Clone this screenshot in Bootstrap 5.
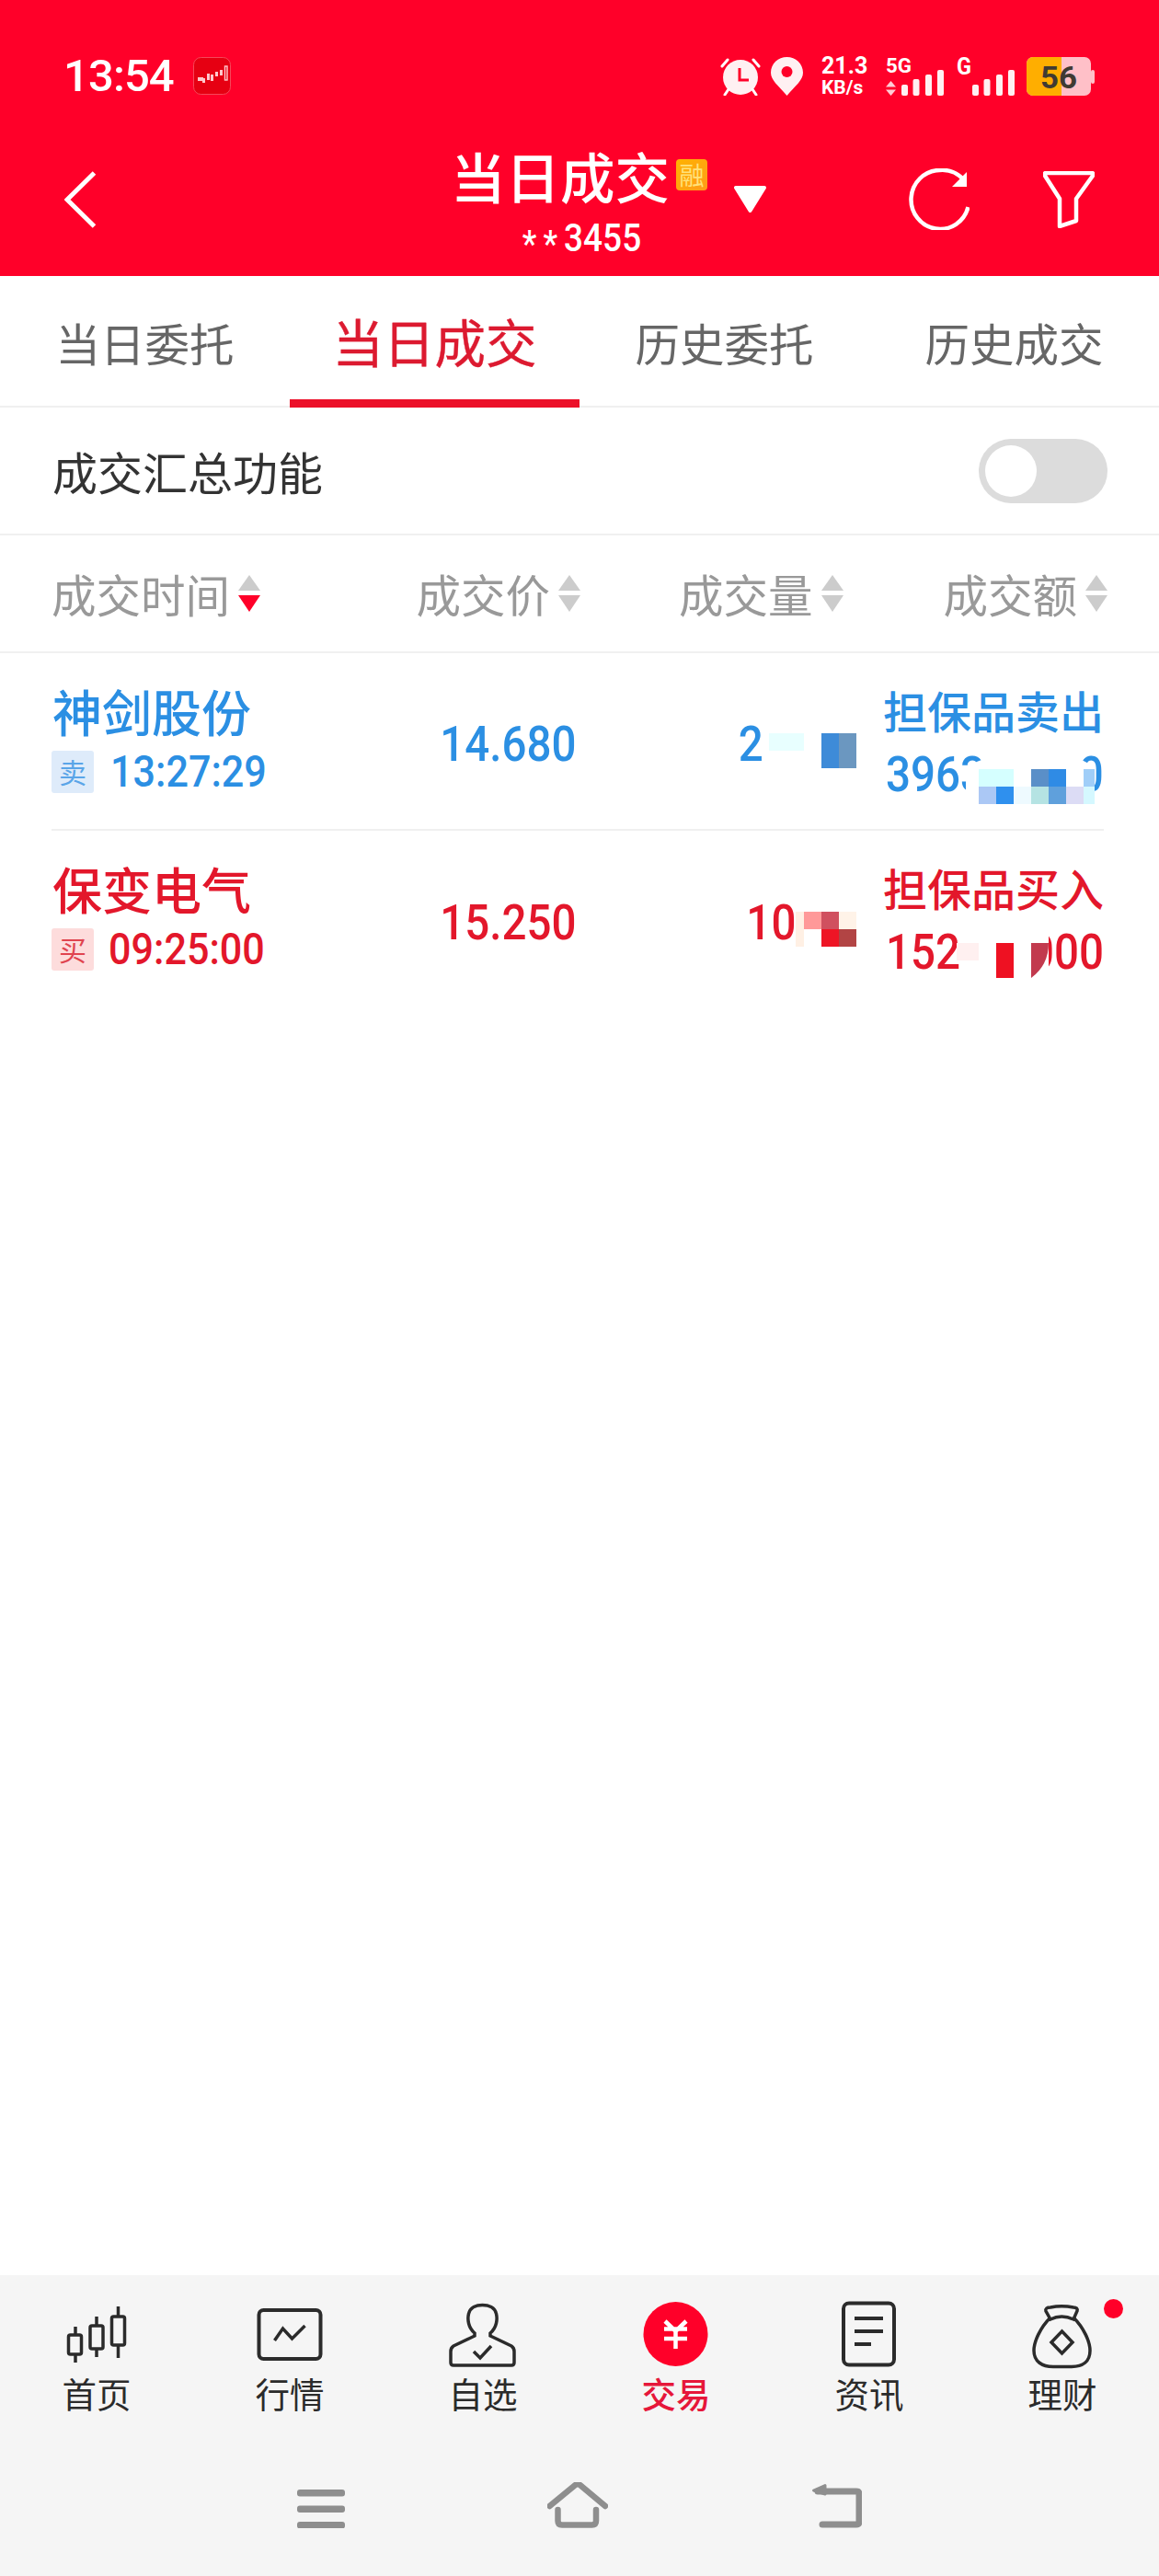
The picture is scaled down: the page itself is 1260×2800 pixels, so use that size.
<!DOCTYPE html>
<html lang="zh-CN">
<head>
<meta charset="utf-8">
<title>当日成交</title>
<link href="https://cdn.jsdelivr.net/npm/bootstrap@5.3.0/dist/css/bootstrap.min.css" rel="stylesheet">
<style>
html,body{margin:0;background:#fff}
body{width:1260px;height:2800px;font-family:"Noto Sans CJK SC","Noto Sans",sans-serif;overflow:hidden}
svg{display:block;flex:none}
.num{font-family:Roboto,"Noto Sans CJK SC",sans-serif}
.nar-l,.nar-r,.nar-c{display:inline-block;transform:scaleX(.88)}
.nar-l{transform-origin:left center}
.nar-r{transform-origin:right center}
.nar-c{transform-origin:center}
.app-shell{height:2800px}
.top-red{background:#ff0029;height:300px;color:#fff;flex:none}
.status-line{height:110px;padding:62px 70px 0 69px}
.clock{font-family:Roboto,sans-serif;font-size:49px;line-height:42px;font-weight:500;letter-spacing:-.9px;margin-right:21px}
.st-text{font-family:Roboto,sans-serif;font-weight:700;fill:#fff}
.st-tall{margin-top:-10px}
.net-speed{width:49px;margin-right:21px;font-family:Roboto,sans-serif;font-weight:700;white-space:nowrap}
.net-a{font-size:25px;line-height:20px}
.net-b{font-size:21px;line-height:20px;margin-top:3px}
.title-line{height:190px;padding-left:70px;padding-right:70px}
.back-ic{margin-top:76px;margin-right:385px}
.title-group{width:279px;padding-top:45px}
.title-main{font-size:59.500px;line-height:70px;font-weight:500;white-space:nowrap}
.rong{width:35px;height:34px;margin:18px 0 0 7px;background:linear-gradient(135deg,#ffb300,#ff9a1a);border-radius:4px;color:#ffe27a;font-size:27px;line-height:34px;text-align:center}
.title-sub{font-size:42px;line-height:40px;font-weight:500;margin-top:14px;text-align:center;padding-left:6px;white-space:nowrap}
.star{font-size:40px;position:relative;top:6px;letter-spacing:8px}
.tri-ic{margin:92px 0 0 29px}
.ref-ic{margin-top:73px}
.fil-ic{margin:76px 0 0 80px}
.tabs-line{height:143px;border-bottom:2px solid #f0f0f0;flex:none}
.tab-cell{height:141px;color:#666;font-size:48.500px;line-height:144px;text-align:center}
.tab-on{color:#dc1a30;font-size:55.500px;font-weight:400;box-shadow:inset 0 -7px 0 #ec1029,0 2px 0 #ec1029;line-height:140px;-webkit-text-stroke:.4px #dc1a30}
.sum-line{height:139px;border-bottom:2px solid #f0f0f0;padding:0 56px 0 57px;flex:none;color:#333;font-size:49px}
.sw-track{width:140px;height:70px;border-radius:35px;background:#dcdcdc;padding:7px}
.sw-knob{width:56px;height:56px;border-radius:50%;background:#fff}
.sort-line{height:128px;border-bottom:2px solid #f0f0f0;padding:0 56px;color:#999;font-size:48.500px;flex:none}
.sort-cell{gap:9px}
.sc1{width:227px}.sc2{width:348px}.sc3{width:285.5px}.sc4{width:287.5px}
.trade-row{height:193px;margin:0 60px 0 56px;border-bottom:2px solid #f0f0f0}
.trade-row.last-row{border-bottom:0}
.tr-sell{color:#2b8fe3}
.tr-buy{color:#e3172b}
.tc1{width:234px;padding-top:31px;flex:none}
.tc2{width:336px;flex:none}
.tc3{width:305px;flex:none}
.tc4{width:269px;padding-top:31px;flex:none}
.stock{font-size:54px;line-height:64px;font-weight:500;padding-left:1px}
.tm-line{margin-top:11px;height:46px}
.side-tag{width:46px;height:46px;flex:none;font-size:30px;line-height:44px;text-align:center;border-radius:3px;margin-right:18px}
.tr-sell .side-tag{background:#deebfa;color:#5aa5e8}
.tr-buy .side-tag{background:#fddcdc;color:#e0444f;margin-right:16px}
.tm{font-size:49px;line-height:46px;font-weight:500;white-space:nowrap}
.px{font-size:54px;font-weight:500;padding-top:7px;line-height:60px}
.mos{margin-top:21px}
.trade-kind{font-size:48px;line-height:60px;font-weight:500;text-align:right;white-space:nowrap}
.amt{height:60px;margin-top:11px;padding-left:32px;font-size:54px;line-height:60px;font-weight:500}
.amt-over{position:absolute}
.bottom-nav{background:#f5f5f5;height:327px;flex:none}
.nav-cell{padding-top:27px;height:150px;color:#2b2b2b;font-size:37.500px;line-height:50px}
.nav-on{color:#e6173a;font-weight:500}
.nav-label{margin-top:0}
.gest{gap:220px;padding-top:75px}
</style>
</head>
<body>
<div class="app-shell d-flex flex-column">

<header class="top-red">
  <div class="status-line d-flex align-items-start">
    <span class="clock">13:54</span>
    <svg width="41" height="41" viewBox="208 62 41 41"><rect x="208.5" y="62.5" width="40" height="40" rx="8" fill="#e60012" stroke="#f5475a"/><g fill="#ffc9cd"><rect x="213" y="84" width="6" height="4"/><rect x="218" y="85" width="3" height="5"/><rect x="223" y="80" width="3" height="7"/><rect x="227" y="81" width="3" height="7"/><rect x="232" y="78" width="3" height="5"/><rect x="237" y="76" width="3" height="6"/></g><rect x="242.5" y="72" width="2.5" height="15" fill="none" stroke="#ffc9cd" stroke-width="1.4"/></svg>
    <div class="d-flex align-items-start ms-auto">
      <svg width="44" height="42" viewBox="783 62 44 42" style="margin-right:11px"><g stroke="#fff" stroke-width="3" fill="none" stroke-linecap="round"><path d="M785 72 L791 65"/><path d="M825 72 L819 65"/><path d="M792 97 L788 103"/><path d="M818 97 L822 103"/></g><circle cx="805" cy="84" r="19" fill="#fff" fill-opacity=".94"/><path d="M804 74 V87 H814" fill="none" stroke="#ff0029" stroke-width="3"/></svg>
      <svg width="35" height="42" viewBox="838 62 35 42" style="margin-right:20px"><path d="M855.500 104 C846 93 838 87 838 79 C838 69 846 62 855.500 62 C865 62 873 69 873 79 C873 87 865 93 855.500 104Z" fill="#fff" fill-opacity=".94"/><circle cx="855.500" cy="78" r="6" fill="#ff0029"/></svg>
      <div class="net-speed"><div class="net-a">21.3</div><div class="net-b">KB/s</div></div>
      <svg class="st-tall" width="64" height="52" viewBox="963 52 64 52" style="margin-right:12px"><text class="st-text" x="963" y="79" font-size="22" textLength="28" lengthAdjust="spacingAndGlyphs">5G</text><path d="M968.500 88 L974 94.500 H963Z M968.500 104 L974 97.500 H963Z" fill="#fff" fill-opacity=".8"/><g fill="#fff" fill-opacity=".94"><rect x="980" y="92" width="7" height="12" rx="2"/><rect x="992.500" y="86" width="7" height="18" rx="2"/><rect x="1006" y="81" width="7" height="23" rx="2"/><rect x="1019" y="76" width="7" height="28" rx="2"/></g></svg>
      <svg class="st-tall" width="64" height="52" viewBox="1039 52 64 52" style="margin-right:13px"><text class="st-text" x="1040" y="81" font-size="25" textLength="16" lengthAdjust="spacingAndGlyphs">G</text><g fill="#fff" fill-opacity=".94"><rect x="1057" y="92" width="7" height="12" rx="2"/><rect x="1069.500" y="86" width="7" height="18" rx="2"/><rect x="1083" y="81" width="7" height="23" rx="2"/><rect x="1096" y="76" width="7" height="28" rx="2"/></g></svg>
      <svg width="74" height="42" viewBox="1116 62 74 42"><rect x="1116" y="62" width="70" height="42" rx="7" fill="#ffc0c8"/><path d="M1123 62 H1154 V104 H1123 A7 7 0 0 1 1116 97 V69 A7 7 0 0 1 1123 62Z" fill="#ffae00"/><rect x="1186" y="76" width="4" height="15" rx="2" fill="#ffc0c8"/><text x="1131" y="96" font-family="Roboto,sans-serif" font-weight="700" font-size="33" fill="#403a33" textLength="40" lengthAdjust="spacingAndGlyphs">56</text></svg>
    </div>
  </div>
  <div class="title-line d-flex align-items-start">
    <svg class="back-ic" width="35" height="62" viewBox="70 186 35 62"><path d="M102.500 188 L73 217 L102.500 246" fill="none" stroke="#fff" stroke-width="5"/></svg>
    <div class="title-group">
      <div class="d-flex align-items-start"><span class="title-main">当日成交</span><span class="rong">融</span></div>
      <div class="title-sub num"><span class="nar-c"><span class="star">**</span>3455</span></div>
    </div>
    <svg class="tri-ic" width="35" height="29" viewBox="798 202 35 29"><path d="M800 204 H831 L815.500 229Z" fill="#fff" stroke="#fff" stroke-width="4" stroke-linejoin="round"/></svg>
    <svg class="ref-ic ms-auto" width="66" height="67" viewBox="988 183 66 67"><path d="M1048 196 A31 31 0 0 0 1021 185 A31.500 32 0 1 0 1052.500 225" fill="none" stroke="#fff" stroke-width="4.500"/><path d="M1051 187 V203 H1035Z" fill="#fff"/></svg>
    <svg class="fil-ic" width="56" height="62" viewBox="1134 186 56 62"><path d="M1137 188 H1187 Q1189 188 1188 191 L1170 216 V240 L1152 246 V216 L1136 191 Q1135 188 1137 188Z" fill="none" stroke="#fff" stroke-width="4.500" stroke-linejoin="round"/></svg>
  </div>
</header>

<nav class="tabs-line row g-0">
  <div class="col-3 tab-cell">当日委托</div>
  <div class="col-3 tab-cell tab-on">当日成交</div>
  <div class="col-3 tab-cell">历史委托</div>
  <div class="col-3 tab-cell">历史成交</div>
</nav>

<div class="sum-line d-flex align-items-center justify-content-between">
  <span>成交汇总功能</span>
  <div class="sw-track"><div class="sw-knob"></div></div>
</div>

<div class="sort-line d-flex align-items-center">
  <div class="sort-cell sc1 d-flex align-items-center ps-0"><span>成交时间</span><svg width="24" height="40" viewBox="0 0 24 40"><path d="M12 0 L24 17 H0Z" fill="#ccc"/><path d="M0 22 H24 L12 40Z" fill="#ff0029"/></svg></div>
  <div class="sort-cell sc2 d-flex align-items-center justify-content-end"><span>成交价</span><svg width="24" height="40" viewBox="0 0 24 40"><path d="M12 0 L24 17 H0Z" fill="#ccc"/><path d="M0 22 H24 L12 40Z" fill="#ccc"/></svg></div>
  <div class="sort-cell sc3 d-flex align-items-center justify-content-end"><span>成交量</span><svg width="24" height="40" viewBox="0 0 24 40"><path d="M12 0 L24 17 H0Z" fill="#ccc"/><path d="M0 22 H24 L12 40Z" fill="#ccc"/></svg></div>
  <div class="sort-cell sc4 d-flex align-items-center justify-content-end"><span>成交额</span><svg width="24" height="40" viewBox="0 0 24 40"><path d="M12 0 L24 17 H0Z" fill="#ccc"/><path d="M0 22 H24 L12 40Z" fill="#ccc"/></svg></div>
</div>

<main class="flex-grow-1">
  <div class="trade-row tr-sell d-flex">
    <div class="tc1">
      <div class="stock">神剑股份</div>
      <div class="tm-line d-flex align-items-center"><span class="side-tag">卖</span><span class="tm num nar-l">13:27:29</span></div>
    </div>
    <div class="tc2 d-flex align-items-center justify-content-end"><span class="px num nar-r">14.680</span></div>
    <div class="tc3 d-flex align-items-center justify-content-end">
      <span class="px num nar-r">2</span>
      <svg class="mos" width="101" height="38" viewBox="830 798 101 38"><rect x="836" y="798" width="38" height="19" fill="#e8ffff"/><rect x="893" y="798" width="19" height="38" fill="#3e8bd8"/><rect x="912" y="798" width="19" height="38" fill="#6b97c0"/></svg>
    </div>
    <div class="tc4">
      <div class="trade-kind">担保品卖出</div>
      <div class="amt num position-relative d-flex justify-content-between"><span class="nar-l">3963</span><span class="nar-r">0</span>
        <svg class="amt-over" style="left:113px;top:10px" width="156" height="62" viewBox="1044 822 156 62"><path d="M1050 840 Q1060 822 1085 825 H1165 Q1185 825 1190 840 V874 H1064 L1050 860Z" fill="#fff"/><g><rect x="1064" y="836" width="38" height="19" fill="#d5ffff"/><rect x="1121" y="836" width="19" height="19" fill="#5a8fc8"/><rect x="1140" y="836" width="19" height="19" fill="#2f8be5"/><rect x="1178" y="836" width="12" height="19" fill="#a0cef8"/><rect x="1064" y="855" width="19" height="19" fill="#abc8f5"/><rect x="1083" y="855" width="19" height="19" fill="#2f90ee"/><rect x="1102" y="855" width="19" height="19" fill="#eefaff"/><rect x="1121" y="855" width="19" height="19" fill="#b5e3e3"/><rect x="1140" y="855" width="19" height="19" fill="#5fa0dc"/><rect x="1159" y="855" width="19" height="19" fill="#dcdcf5"/><rect x="1178" y="855" width="12" height="19" fill="#d5f8ff"/></g></svg>
      </div>
    </div>
  </div>
  <div class="trade-row last-row tr-buy d-flex">
    <div class="tc1">
      <div class="stock">保变电气</div>
      <div class="tm-line d-flex align-items-center"><span class="side-tag">买</span><span class="tm num nar-l">09:25:00</span></div>
    </div>
    <div class="tc2 d-flex align-items-center justify-content-end"><span class="px num nar-r">15.250</span></div>
    <div class="tc3 d-flex align-items-center justify-content-end">
      <span class="px num nar-r">10</span>
      <svg class="mos" width="66" height="38" viewBox="865 988 66 38"><rect x="865" y="988" width="9" height="38" fill="#fff0e4"/><rect x="874" y="988" width="19" height="19" fill="#ff9999"/><rect x="893" y="988" width="19" height="19" fill="#d0505f"/><rect x="912" y="988" width="19" height="19" fill="#fff3e8"/><rect x="893" y="1007" width="19" height="19" fill="#ee1525"/><rect x="912" y="1007" width="19" height="19" fill="#b24444"/></svg>
    </div>
    <div class="tc4">
      <div class="trade-kind">担保品买入</div>
      <div class="amt num position-relative d-flex justify-content-between"><span class="nar-l">152</span><span class="nar-r">000</span>
        <svg class="amt-over" style="left:109px;top:9px" width="112" height="50" viewBox="1040 1015 112 50"><path d="M1040 1026 H1064 V1015 H1140 V1064 H1060 L1040 1045Z" fill="#fff"/><rect x="1040" y="1026" width="24" height="19" fill="#fff0f0"/><rect x="1083" y="1026" width="19" height="38" fill="#ee1122"/><path d="M1121 1026 H1140 Q1140 1050 1121 1064Z" fill="#c23a4e"/></svg>
      </div>
    </div>
  </div>
</main>

<footer class="bottom-nav">
  <div class="row g-0">
    <div class="col-2 nav-cell d-flex flex-column align-items-center">
      <svg width="100" height="76" viewBox="54.500 2500 100 76" fill="none" stroke="#2b2b2b" stroke-width="3.500"><path d="M81.500 2529 V2538 M81.500 2559 V2568 M104.500 2518 V2528 M104.500 2553 V2562 M128 2507 V2518 M128 2549 V2563"/><rect x="74" y="2538" width="14" height="21" rx="2"/><rect x="97.500" y="2528" width="14" height="25" rx="2"/><rect x="121" y="2518" width="14" height="31" rx="2"/></svg>
      <span class="nav-label">首页</span>
    </div>
    <div class="col-2 nav-cell d-flex flex-column align-items-center">
      <svg width="100" height="76" viewBox="264.500 2500 100 76" fill="none" stroke="#2b2b2b" stroke-width="4"><rect x="281" y="2511" width="67" height="53" rx="5"/><path d="M298 2544 L307 2531 L317 2542 L331 2528" stroke-width="3.500"/></svg>
      <span class="nav-label">行情</span>
    </div>
    <div class="col-2 nav-cell d-flex flex-column align-items-center">
      <svg width="100" height="76" viewBox="475 2500 100 76" fill="none" stroke="#2b2b2b" stroke-width="3.500"><path d="M516 2536 C509 2530 508 2521 509.500 2515 C511 2508 518 2505.500 524.500 2505.500 C531 2505.500 538 2508 539.500 2515 C541 2521 540 2530 533 2536 L533 2539 L556 2550 Q559 2552 559 2556 L559 2568 Q559 2571 556 2571 L493 2571 Q490 2571 490 2568 L490 2556 Q490 2552 493 2550 L516 2539Z"/><path d="M515 2556 L522 2563 L534 2550"/></svg>
      <span class="nav-label">自选</span>
    </div>
    <div class="col-2 nav-cell nav-on d-flex flex-column align-items-center">
      <svg width="100" height="76" viewBox="685 2500 100 76"><circle cx="734.500" cy="2537" r="35" fill="#ff0029"/><path d="M723 2523 L734.500 2534 L746 2523 M722 2531.500 H747 M722 2542 H747 M734.500 2534 V2553" fill="none" stroke="#fff" stroke-width="4.500"/></svg>
      <span class="nav-label">交易</span>
    </div>
    <div class="col-2 nav-cell d-flex flex-column align-items-center">
      <svg width="100" height="76" viewBox="895 2500 100 76" fill="none" stroke="#2b2b2b" stroke-width="4"><rect x="917" y="2503.500" width="55" height="67" rx="6"/><path d="M929 2520 H960 M929 2534 H960 M929 2548 H947"/></svg>
      <span class="nav-label">资讯</span>
    </div>
    <div class="col-2 nav-cell position-relative d-flex flex-column align-items-center">
      <svg width="100" height="76" viewBox="1105 2500 100 76" fill="none" stroke="#2b2b2b" stroke-width="3.500"><path d="M1142 2519 C1131 2530 1124 2545 1124 2555 C1124 2567 1133 2572.500 1145 2572.500 H1165 C1177 2572.500 1185 2567 1185 2555 C1185 2545 1178 2530 1167 2519"/><path d="M1142 2521 L1137 2512 Q1136 2508 1142 2508 Q1154 2505.500 1167 2508 Q1172 2508 1171 2512 L1167 2521 Q1154 2515 1142 2521Z"/><path d="M1154.500 2534 L1166 2546 L1154.500 2558 L1143 2546Z"/></svg>
      <span class="nav-label">理财</span>
      <svg class="position-absolute" style="left:150px;top:26px" width="21" height="21" viewBox="0 0 21 21"><circle cx="10.500" cy="10.500" r="10.500" fill="#ff0029"/></svg>
    </div>
  </div>
  <div class="gest d-flex justify-content-center">
    <svg width="52" height="50" viewBox="324 2698 52 50" fill="#8e8e8e"><rect x="324" y="2706" width="52" height="7.500" rx="3"/><rect x="324" y="2723.500" width="52" height="7.500" rx="3"/><rect x="324" y="2741" width="52" height="7.500" rx="3"/></svg>
    <svg width="66" height="50" viewBox="597.500 2698 66 50" fill="none" stroke="#8e8e8e" stroke-width="6.500" stroke-linecap="round" stroke-linejoin="round"><path d="M600 2724 L628 2701 Q630.500 2699.500 633 2701 L660.500 2724"/><path d="M609 2728 V2740 Q609 2744.500 613.500 2744.500 H646 Q650.500 2744.500 650.500 2740 V2728"/></svg>
    <svg width="56" height="50" viewBox="882 2698 56 50" fill="none" stroke="#8e8e8e" stroke-width="7" stroke-linecap="round" stroke-linejoin="round"><path d="M895 2744 H932 Q935 2744 935 2741 V2711 Q935 2708 932 2708 H890"/><path d="M898 2701.500 L885.500 2707 L898 2711Z" fill="#8e8e8e" stroke-width="3"/></svg>
  </div>
</footer>
</div>
<script src="https://cdn.jsdelivr.net/npm/bootstrap@5.3.0/dist/js/bootstrap.bundle.min.js"></script>
</body>
</html>
